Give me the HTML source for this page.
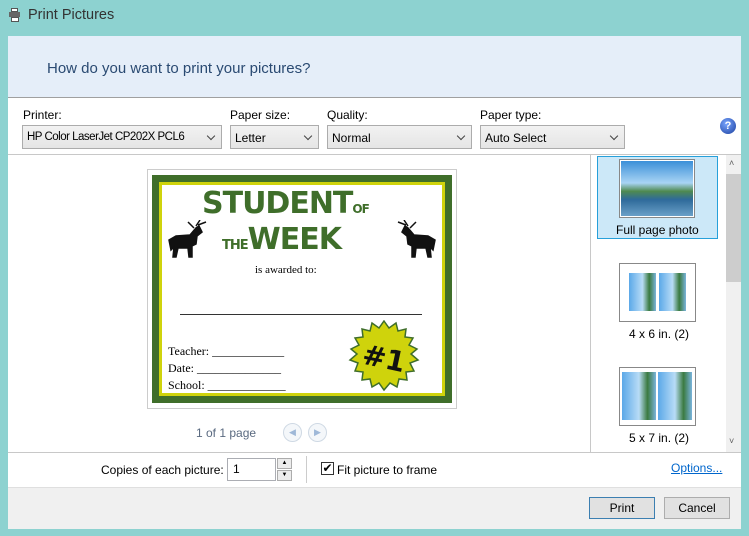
<!DOCTYPE html>
<html><head><style>
*{box-sizing:border-box;margin:0;padding:0}
body{width:749px;height:536px;background:#8dd2d0;font-family:"Liberation Sans",sans-serif;font-size:12px;color:#000;position:relative;overflow:hidden}
.a{position:absolute}
.sel{position:absolute;top:125px;height:24px;border:1px solid #acacac;background:linear-gradient(#f2f2f2,#e5e5e5);font-size:12px;padding:5px 4px;white-space:nowrap;overflow:hidden}
.sel:after{content:"";position:absolute;right:7px;top:7px;width:5px;height:5px;border-right:1.5px solid #444;border-bottom:1.5px solid #444;transform:rotate(45deg)}
.lbl{position:absolute;top:108px;font-size:12px}
.btn{position:absolute;top:497px;height:22px;border:1px solid #adadad;background:#e1e1e1;text-align:center;line-height:20px}
</style></head><body>
<div class="a" style="left:9px;top:8px;width:11px;height:14px">
<div class="a" style="left:2px;top:0;width:7px;height:4px;border:1px solid #555;background:#fff"></div>
<div class="a" style="left:0;top:4px;width:11px;height:5px;background:#666"></div>
<div class="a" style="left:2px;top:9px;width:8px;height:5px;border:1px solid #555;background:#fff"></div>
</div>
<div class="a" style="left:28px;top:7px;font-size:14.5px;color:#333">Print Pictures</div>
<div class="a" style="left:8px;top:36px;width:733px;height:62px;background:#e5eef9;border-bottom:1px solid #a0a0a0"></div>
<div class="a" style="left:8px;top:98px;width:733px;height:431px;background:#fff"></div>
<div class="a" style="left:47px;top:60px;font-size:15px;color:#2a4a72">How do you want to print your pictures?</div>
<div class="lbl" style="left:23px">Printer:</div>
<div class="lbl" style="left:230px">Paper size:</div>
<div class="lbl" style="left:327px">Quality:</div>
<div class="lbl" style="left:480px">Paper type:</div>
<div class="sel" style="left:22px;width:200px;letter-spacing:-0.5px;font-size:11.5px">HP Color LaserJet CP202X PCL6</div>
<div class="sel" style="left:230px;width:89px">Letter</div>
<div class="sel" style="left:327px;width:145px">Normal</div>
<div class="sel" style="left:480px;width:145px">Auto Select</div>
<div class="a" style="left:720px;top:118px;width:16px;height:16px;border-radius:50%;background:radial-gradient(circle at 40% 35%,#7aa6ff,#1a3f9e);color:#fff;font-size:11px;font-weight:bold;text-align:center;line-height:16px">?</div>
<div class="a" style="left:8px;top:154px;width:733px;height:1px;background:#c8c8c8"></div>
<div class="a" style="left:590px;top:155px;width:1px;height:297px;background:#c8c8c8"></div>
<!-- certificate -->
<div class="a" style="left:147px;top:169px;width:310px;height:240px;border:1px solid #ccc;background:#fff"></div>
<div class="a" style="left:152px;top:175px;width:300px;height:228px;background:#3f6e2a"></div>
<div class="a" style="left:159px;top:182px;width:286px;height:214px;background:#cfd30c"></div>
<div class="a" style="left:162px;top:185px;width:280px;height:208px;background:#fff"></div>
<div class="a" style="left:202px;top:186px;font-family:'DejaVu Sans';font-weight:900;font-size:30px;color:#3f6e2a;letter-spacing:-1px">STUDENT<span style="font-size:12px">OF</span></div>
<div class="a" style="left:222px;top:222px;font-family:'DejaVu Sans';font-weight:900;font-size:30px;color:#3f6e2a;letter-spacing:-1px"><span style="font-size:13px">THE</span>WEEK</div>
<div class="a" style="left:166px;top:220px;width:42px;height:38px">
<svg width="42" height="38"><path d="M3 20 L10 16 L24 15 L30 8 L33 6 L36 12 L31 16 L30 24 L26 26 L26 37 L23 37 L22 28 L12 28 L10 37 L7 37 L8 27 L5 30 Z M28 8 L22 2 M30 6 L34 0 M32 5 L40 2" fill="#111" stroke="#111" stroke-width="1.5"/></svg></div>
<div class="a" style="left:396px;top:220px;width:42px;height:38px;transform:scaleX(-1)">
<svg width="42" height="38"><path d="M3 20 L10 16 L24 15 L30 8 L33 6 L36 12 L31 16 L30 24 L26 26 L26 37 L23 37 L22 28 L12 28 L10 37 L7 37 L8 27 L5 30 Z M28 8 L22 2 M30 6 L34 0 M32 5 L40 2" fill="#111" stroke="#111" stroke-width="1.5"/></svg></div>
<div class="a" style="left:255px;top:264px;font-size:11px;font-family:'Liberation Serif'">is awarded to:</div>
<div class="a" style="left:180px;top:314px;width:242px;height:1px;background:#333"></div>
<div class="a" style="left:168px;top:343px;font-size:12px;font-family:'Liberation Serif';line-height:17px">Teacher: ____________<br>Date: ______________<br>School: _____________</div>
<svg class="a" style="left:346px;top:320px" width="76" height="72"><polygon points="38,1 43,8 50,3 52,11 60,9 59,17 67,18 63,25 71,29 65,34 72,40 64,43 68,51 60,52 61,60 53,59 51,67 44,63 38,70 33,63 26,67 24,59 16,60 17,52 9,51 12,43 4,40 11,34 5,29 13,25 9,18 17,17 16,9 24,11 26,3 33,8" fill="#cfd30c" stroke="#3f6e2a" stroke-width="1.5"/><text x="17" y="48" font-family="DejaVu Sans" font-weight="900" font-size="28" fill="#111" transform="rotate(12 38 36)">#1</text></svg>
<div class="a" style="left:196px;top:426px;color:#5a6a80">1 of 1 page</div>
<div class="a" style="left:283px;top:423px;width:19px;height:19px;border-radius:50%;border:1px solid #cfd9e4;background:#f4f7fa;color:#9fb8d8;font-size:9px;text-align:center;line-height:17px">◀</div>
<div class="a" style="left:308px;top:423px;width:19px;height:19px;border-radius:50%;border:1px solid #cfd9e4;background:#f4f7fa;color:#9fb8d8;font-size:9px;text-align:center;line-height:17px">▶</div>
<!-- right panel -->
<div class="a" style="left:597px;top:156px;width:121px;height:83px;background:#cce8f8;border:1px solid #26a0da"></div>
<div class="a" style="left:619px;top:159px;width:76px;height:59px;border:1px solid #888;background:#fff;padding:1px"><div style="width:100%;height:100%;background:linear-gradient(#3a8fd8 0%,#a8d4f4 40%,#4f8a50 55%,#2e6a9a 70%,#6aa0c8 100%)"></div></div>
<div class="a" style="left:616px;top:223px">Full page photo</div>
<div class="a" style="left:619px;top:263px;width:77px;height:59px;border:1px solid #888;background:#fff"></div>
<div class="a" style="left:629px;top:273px;width:27px;height:38px;background:linear-gradient(90deg,#5ba8e8,#b8dcf6 50%,#3a7a40 75%,#7ab4dc)"></div>
<div class="a" style="left:659px;top:273px;width:27px;height:38px;background:linear-gradient(90deg,#5ba8e8,#b8dcf6 50%,#3a7a40 75%,#7ab4dc)"></div>
<div class="a" style="left:629px;top:327px">4 x 6 in. (2)</div>
<div class="a" style="left:619px;top:367px;width:77px;height:59px;border:1px solid #888;background:#fff"></div>
<div class="a" style="left:622px;top:372px;width:34px;height:48px;background:linear-gradient(90deg,#5ba8e8,#b8dcf6 50%,#3a7a40 75%,#7ab4dc)"></div>
<div class="a" style="left:658px;top:372px;width:34px;height:48px;background:linear-gradient(90deg,#5ba8e8,#b8dcf6 50%,#3a7a40 75%,#7ab4dc)"></div>
<div class="a" style="left:629px;top:431px">5 x 7 in. (2)</div>
<div class="a" style="left:726px;top:155px;width:15px;height:297px;background:#f0f0f0"></div>
<div class="a" style="left:726px;top:174px;width:15px;height:108px;background:#cdcdcd"></div>
<div class="a" style="left:729px;top:158px;font-size:9px;color:#606060">˄</div>
<div class="a" style="left:729px;top:436px;font-size:9px;color:#606060">˅</div>
<div class="a" style="left:8px;top:452px;width:733px;height:1px;background:#c8c8c8"></div>
<!-- bottom -->
<div class="a" style="left:101px;top:463px">Copies of each picture:</div>
<div class="a" style="left:227px;top:458px;width:49px;height:23px;border:1px solid #abadb3;padding:3px 5px">1</div>
<div class="a" style="left:277px;top:458px;width:15px;height:11px;border:1px solid #acacac;background:#ececec;font-size:6px;text-align:center;line-height:9px">▲</div>
<div class="a" style="left:277px;top:470px;width:15px;height:11px;border:1px solid #acacac;background:#ececec;font-size:6px;text-align:center;line-height:9px">▼</div>
<div class="a" style="left:306px;top:456px;width:1px;height:27px;background:#ccc"></div>
<div class="a" style="left:321px;top:462px;width:13px;height:13px;border:1px solid #333;background:#fff;font-size:12px;line-height:11px;text-align:center">✔</div>
<div class="a" style="left:337px;top:463px">Fit picture to frame</div>
<div class="a" style="left:671px;top:461px;color:#0066cc;text-decoration:underline">Options...</div>
<div class="a" style="left:8px;top:487px;width:733px;height:42px;background:#f0f0f0;border-top:1px solid #dfdfdf"></div>
<div class="btn" style="left:589px;width:66px;border-color:#3c7fb1">Print</div>
<div class="btn" style="left:664px;width:66px">Cancel</div>
</body></html>
